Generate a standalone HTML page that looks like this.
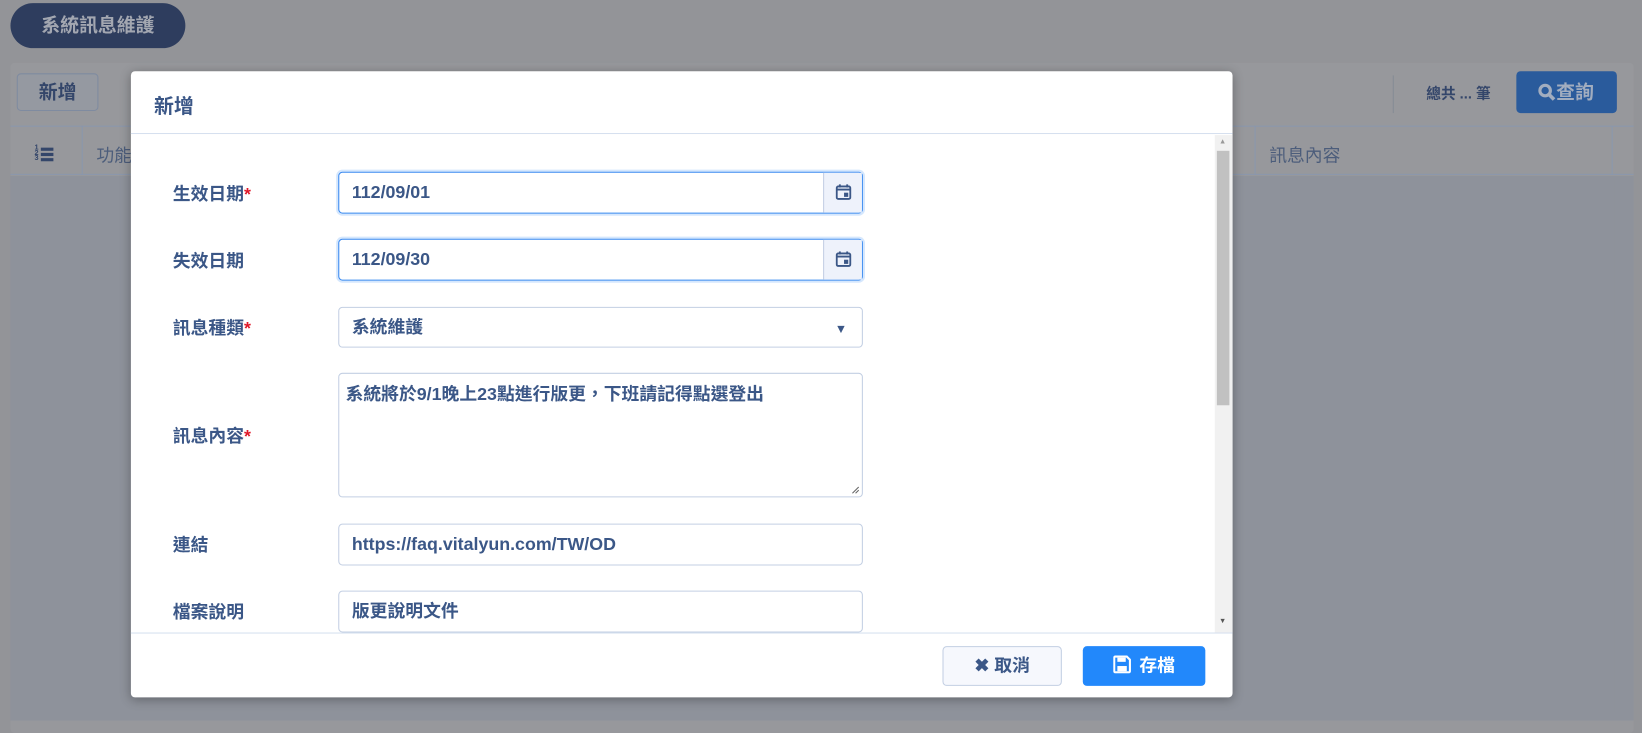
<!DOCTYPE html>
<html><head><meta charset="utf-8"><style>
*{box-sizing:border-box;margin:0;padding:0}
body{width:1642px;height:718px;overflow:hidden;background:#939498;font-family:"Liberation Sans","Noto Sans CJK TC",sans-serif;color:#3b5787}
#w{position:absolute;left:0;top:0;width:1568px;height:686px;transform:scale(1.0472);transform-origin:0 0}
.abs{position:absolute}
.pill{left:10px;top:3px;width:167px;height:43px;border-radius:22px;background:#2e3d5e;color:#a3a7b1;font-weight:bold;font-size:18px;line-height:43px;text-align:center}
.panel{left:10px;top:60px;width:1550px;height:640px;background:#97989c;border-radius:4px}
.btnadd{left:16px;top:70px;width:78px;height:36px;border:1px solid #7f8ba0;border-radius:4px;font-size:18px;line-height:34px;text-align:center;color:#34466a;font-weight:bold;background:#9599a1}
.hdr{left:10px;top:120px;width:1550px;height:47px;border-top:1px solid #8a97ad;border-bottom:1px solid #8a97ad}
.tbody{left:10px;top:168px;width:1550px;height:520px;background:#8e929b}
.modal{left:125px;top:68px;width:1052px;height:598px;background:#fff;border-radius:4px;box-shadow:0 2px 10px rgba(0,0,0,.3)}
.mh{left:0;top:0;width:100%;height:60px;border-bottom:1px solid #d6e0ef;font-size:19px;font-weight:bold;padding:19px 0 0 22px}
.lab{left:40px;font-size:17px;font-weight:bold}
.lab b{color:#e0192a}
.inp{left:198px;width:501px;height:40px;border:1px solid #c3cfe3;border-radius:4px;font-size:17px;font-weight:bold;padding:0 12px;line-height:38px;background:#fff}
.foc{border:1.5px solid #3a8af0;box-shadow:0 0 0 2px #d5e7fd}
.cal{position:absolute;right:0;top:0;width:37px;height:100%;background:#eef2fb;border-left:1px solid #c3cfe3}
.ft{left:0;top:536px;width:100%;border-top:1px solid #d6e0ef;height:62px}
</style></head><body><div id="w">
<div class="abs pill">系統訊息維護</div>
<div class="abs panel"></div>
<div class="abs btnadd">新增</div>
<div class="abs hdr"></div>
<div class="abs tbody"></div>
<div class="abs" style="left:78px;top:120px;width:1px;height:47px;background:#8a97ad"></div>
<div class="abs" style="left:33px;top:139px;font-size:7px;line-height:5px;color:#34466a;font-weight:bold">1<br>2<br>3</div>
<div class="abs" style="left:39px;top:141px;width:12px;height:3px;background:#34466a;box-shadow:0 5px 0 #34466a,0 10px 0 #34466a"></div>
<div class="abs" style="left:92px;top:134px;font-size:17px;color:#4c5d7b">功能</div>
<div class="abs" style="left:1198px;top:120px;width:1px;height:47px;background:#8a97ad"></div>
<div class="abs" style="left:1539px;top:120px;width:1px;height:47px;background:#8a97ad"></div>
<div class="abs" style="left:1212px;top:134px;font-size:17px;color:#4c5d7b">訊息內容</div>
<div class="abs" style="left:1330px;top:72px;width:1px;height:36px;background:#858b95"></div>
<div class="abs" style="left:1362px;top:79px;font-size:14px;font-weight:bold;color:#34466a">總共 ... 筆</div>
<div class="abs" style="left:1448px;top:68px;width:96px;height:40px;background:#2a5b9c;border-radius:4px;color:#a2adbf;font-size:18px;font-weight:bold;line-height:40px;padding-left:20px">
<svg width="18" height="18" viewBox="0 0 18 18" style="vertical-align:-3px"><circle cx="7.5" cy="7.5" r="5" stroke="#a2adbf" stroke-width="3" fill="none"/><path d="M11 11l5 5" stroke="#a2adbf" stroke-width="3.5"/></svg>查詢</div>
<div class="abs" style="left:1542px;top:170px;width:14px;height:510px;background:#8e929b"></div>

<div class="abs modal">
<div class="abs mh">新增</div>
<div class="abs" style="left:1035px;top:61px;width:17px;height:475px;background:#f1f1f1"></div>
<div class="abs" style="left:1037px;top:76px;width:12px;height:243px;background:#c1c1c1"></div>
<div class="abs" style="left:1039px;top:64px;font-size:7px;color:#999">▲</div>
<div class="abs" style="left:1039px;top:522px;font-size:7px;color:#555">▼</div>

<div class="abs lab" style="top:103px">生效日期<b>*</b></div>
<div class="abs inp foc" style="top:96px">112/09/01<div class="cal"><svg width="15" height="15" viewBox="0 0 15 15" style="margin:11px"><rect x="1" y="2" width="13" height="12" rx="1.5" stroke="#3b5787" stroke-width="1.8" fill="none"/><path d="M1 5h13M4 0v3M11 0v3" stroke="#3b5787" stroke-width="1.8"/><rect x="8" y="8" width="4" height="4" fill="#3b5787"/></svg></div></div>
<div class="abs lab" style="top:167px">失效日期</div>
<div class="abs inp foc" style="top:160px">112/09/30<div class="cal"><svg width="15" height="15" viewBox="0 0 15 15" style="margin:11px"><rect x="1" y="2" width="13" height="12" rx="1.5" stroke="#3b5787" stroke-width="1.8" fill="none"/><path d="M1 5h13M4 0v3M11 0v3" stroke="#3b5787" stroke-width="1.8"/><rect x="8" y="8" width="4" height="4" fill="#3b5787"/></svg></div></div>
<div class="abs lab" style="top:231px">訊息種類<b>*</b></div>
<div class="abs inp" style="top:225px;height:39px">系統維護<span style="position:absolute;right:14px;top:1px;font-size:12px">▼</span></div>
<div class="abs lab" style="top:334px">訊息內容<b>*</b></div>
<div class="abs inp" style="top:288px;height:119px;line-height:1.4;padding:8px 6px">系統將於9/1晚上23點進行版更，下班請記得點選登出<svg width="8" height="8" viewBox="0 0 8 8" style="position:absolute;right:2px;bottom:2px"><path d="M1 7L7 1M4 7L7 4" stroke="#666" stroke-width="1"/></svg></div>
<div class="abs lab" style="top:438px">連結</div>
<div class="abs inp" style="top:432px">https://faq.vitalyun.com/TW/OD</div>
<div class="abs lab" style="top:502px">檔案說明</div>
<div class="abs inp" style="top:496px;height:40px">版更說明文件</div>

<div class="abs ft"></div>
<div class="abs" style="left:775px;top:549px;width:114px;height:38px;border:1px solid #c3cfe3;border-radius:4px;background:#f6f8fd;font-size:17px;font-weight:bold;line-height:36px;text-align:center">✖ 取消</div>
<div class="abs" style="left:909px;top:549px;width:117px;height:38px;border-radius:4px;background:#2288fb;color:#fff;font-size:17px;font-weight:bold;line-height:38px;text-align:center">
<svg width="17" height="17" viewBox="0 0 17 17" style="vertical-align:-2px;margin-right:8px"><path d="M2 1h11l3 3v11a1 1 0 0 1-1 1H2a1 1 0 0 1-1-1V2a1 1 0 0 1 1-1z" stroke="#fff" stroke-width="2" fill="none"/><rect x="4" y="2" width="8" height="4" fill="#fff"/><rect x="4" y="10" width="9" height="5" fill="#fff"/></svg>存檔</div>
</div>
</div></body></html>
